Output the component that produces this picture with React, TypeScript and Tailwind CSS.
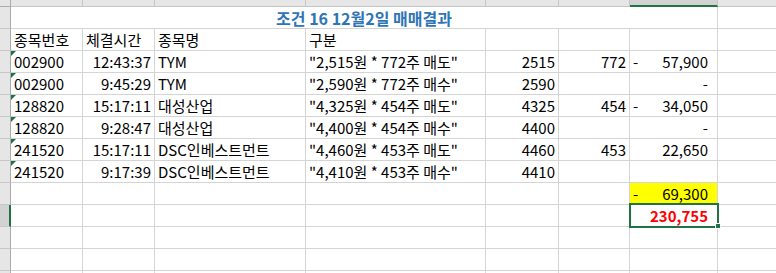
const font = { fontFamily: '"Noto Sans CJK KR", "Noto Sans", sans-serif' };

const widths = ['w-[72px]', 'w-[72px]', 'w-[151px]', 'w-[180px]', 'w-[73px]', 'w-[71px]', 'w-[88px]'];

type Acc = { dash?: boolean; num?: string };

type Row = {
  code?: string;
  time?: string;
  name?: string;
  kind?: string;
  price?: string;
  qty?: string;
  acc?: Acc;
};

const rows: Row[] = [
  { code: '002900', time: '12:43:37', name: 'TYM', kind: '"2,515원 * 772주 매도"', price: '2515', qty: '772', acc: { dash: true, num: '57,900' } },
  { code: '002900', time: '9:45:29', name: 'TYM', kind: '"2,590원 * 772주 매수"', price: '2590', acc: { num: '-' } },
  { code: '128820', time: '15:17:11', name: '대성산업', kind: '"4,325원 * 454주 매도"', price: '4325', qty: '454', acc: { dash: true, num: '34,050' } },
  { code: '128820', time: '9:28:47', name: '대성산업', kind: '"4,400원 * 454주 매수"', price: '4400', acc: { num: '-' } },
  { code: '241520', time: '15:17:11', name: 'DSC인베스트먼트', kind: '"4,460원 * 453주 매도"', price: '4460', qty: '453', acc: { num: '22,650' } },
  { code: '241520', time: '9:17:39', name: 'DSC인베스트먼트', kind: '"4,410원 * 453주 매수"', price: '4410' },
];

const cellBase = 'h-[22px] shrink-0 border-r border-b border-[#d4d4d4] flex items-center px-[3px] whitespace-nowrap relative';

function RowHead({ active }: { active?: boolean }) {
  return (
    <div
      className={
        active
          ? 'w-[11px] h-[22px] shrink-0 bg-[#d2d2d2] border-b border-[#c6c6c6] border-r-2 border-r-[#217346]'
          : 'w-[11px] h-[22px] shrink-0 bg-[#e6e6e6] border-b border-[#c6c6c6] border-r border-r-[#ababab]'
      }
    />
  );
}

function Flag() {
  return <div className="absolute left-0 top-0 w-0 h-0 border-t-[5px] border-r-[5px] border-t-[#1e7145] border-r-transparent" />;
}

function Tail() {
  return <div className="h-[22px] flex-1 border-b border-[#d4d4d4]" />;
}

function Empty({ i }: { i: number }) {
  return <div className={`${cellBase} ${widths[i]}`} />;
}

function AccCell({ acc }: { acc?: Acc }) {
  return (
    <div className={`${cellBase} ${widths[6]} justify-between pr-[9px]`}>
      <span>{acc?.dash ? '-' : ''}</span>
      <span>{acc?.num ?? ''}</span>
    </div>
  );
}

export default function App() {
  return (
    <div className="w-[776px] h-[273px] overflow-hidden bg-white text-[15px] text-black leading-none" style={font}>
      {/* column headers */}
      <div className="flex h-[7px]">
        <div className="w-[11px] h-[7px] shrink-0 bg-[#e6e6e6] border-r border-b border-[#ababab]" />
        {widths.slice(0, 6).map((w, i) => (
          <div key={i} className={`${w} h-[7px] shrink-0 bg-[#e6e6e6] border-r border-b border-[#c6c6c6]`} />
        ))}
        <div className="w-[88px] h-[7px] shrink-0 bg-[#d2d2d2] border-r border-[#c6c6c6] border-b-2 border-b-[#217346]" />
        <div className="flex-1 h-[7px] bg-[#e6e6e6] border-b border-[#c6c6c6]" />
      </div>

      {/* row 1: merged title */}
      <div className="flex">
        <RowHead />
        <div className="w-[707px] h-[22px] shrink-0 border-r border-b border-[#d4d4d4] flex items-center justify-center font-bold text-[16px] text-[#2e75b6]">
          조건 16 12월2일 매매결과
        </div>
        <Tail />
      </div>

      {/* row 2: headers */}
      <div className="flex">
        <RowHead />
        <div className={`${cellBase} ${widths[0]}`}>종목번호</div>
        <div className={`${cellBase} ${widths[1]}`}>체결시간</div>
        <div className={`${cellBase} ${widths[2]}`}>종목명</div>
        <div className={`${cellBase} ${widths[3]}`}>구분</div>
        <Empty i={4} />
        <Empty i={5} />
        <Empty i={6} />
        <Tail />
      </div>

      {rows.map((r, idx) => (
        <div key={idx} className="flex">
          <RowHead />
          <div className={`${cellBase} ${widths[0]}`}>
            <Flag />
            {r.code}
          </div>
          <div className={`${cellBase} ${widths[1]} justify-end`}>{r.time}</div>
          <div className={`${cellBase} ${widths[2]}`}>{r.name}</div>
          <div className={`${cellBase} ${widths[3]}`}>{r.kind}</div>
          <div className={`${cellBase} ${widths[4]} justify-end`}>{r.price}</div>
          <div className={`${cellBase} ${widths[5]} justify-end`}>{r.qty ?? ''}</div>
          <AccCell acc={r.acc} />
          <Tail />
        </div>
      ))}

      {/* row 9: yellow subtotal */}
      <div className="flex">
        <RowHead />
        {[0, 1, 2, 3, 4, 5].map((i) => (
          <Empty key={i} i={i} />
        ))}
        <div className={`${cellBase} ${widths[6]} justify-between pr-[9px] bg-[#ffff00] border-b-[#ffff00]`}>
          <span>-</span>
          <span>69,300</span>
        </div>
        <Tail />
      </div>

      {/* row 10: total, selected */}
      <div className="flex">
        <RowHead active />
        {[0, 1, 2, 3, 4, 5].map((i) => (
          <Empty key={i} i={i} />
        ))}
        <div className={`${cellBase} ${widths[6]} justify-end pr-[9px] font-bold text-[#ff0000] z-10`}>
          230,755
          <div className="absolute -left-[1px] -top-[2px] w-[90px] h-[25px] border-2 border-[#217346]" />
          <div className="absolute left-[85px] top-[18px] w-[6px] h-[6px] bg-[#217346] border border-white" />
        </div>
        <Tail />
      </div>

      {[0, 1, 2].map((k) => (
        <div key={k} className="flex">
          <RowHead />
          {[0, 1, 2, 3, 4, 5, 6].map((i) => (
            <Empty key={i} i={i} />
          ))}
          <Tail />
        </div>
      ))}
    </div>
  );
}
